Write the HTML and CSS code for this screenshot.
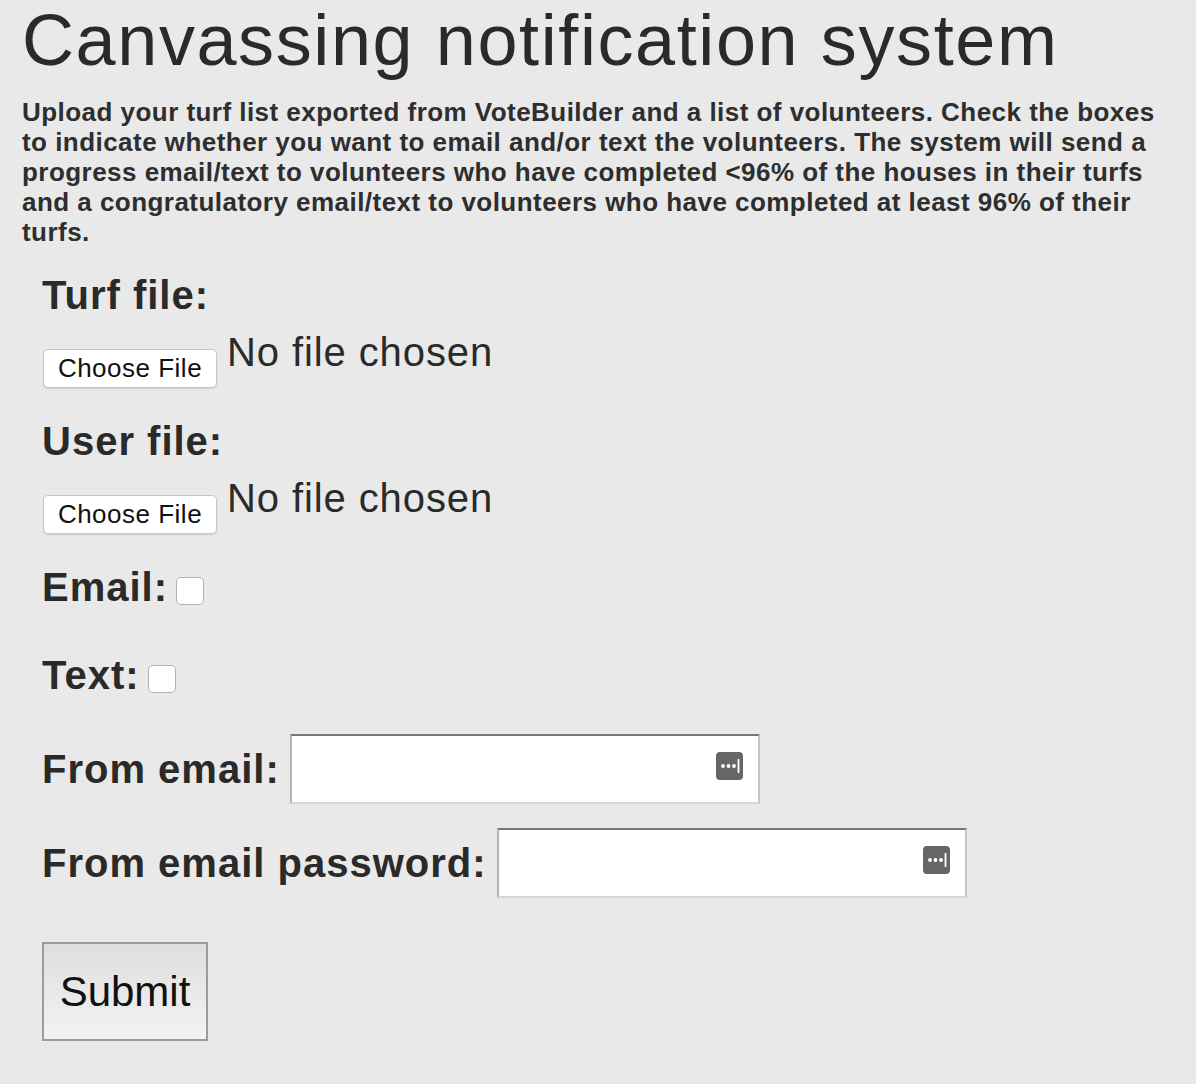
FILE: index.html
```html
<!DOCTYPE html>
<html lang="en">
<head>
<meta charset="utf-8">
<title>Canvassing notification system</title>
<link rel="stylesheet" href="styles.css">
</head>
<body>
<h1 class="title">Canvassing notification system</h1>
<p class="intro">Upload your turf list exported from VoteBuilder and a list of volunteers. Check the boxes to indicate whether you want to email and/or text the volunteers. The system will send a progress email/text to volunteers who have completed &lt;96% of the houses in their turfs and a congratulatory email/text to volunteers who have completed at least 96% of their turfs.</p>
<form class="form">
  <div class="field field-file">
    <label class="label">Turf file:</label>
    <div class="file-row">
      <button type="button" class="file-btn">Choose File</button>
      <span class="file-name">No file chosen</span>
    </div>
  </div>
  <div class="field field-file">
    <label class="label">User file:</label>
    <div class="file-row">
      <button type="button" class="file-btn">Choose File</button>
      <span class="file-name">No file chosen</span>
    </div>
  </div>
  <div class="field field-check">
    <label class="label">Email:</label>
    <span class="checkbox"></span>
  </div>
  <div class="field field-check">
    <label class="label">Text:</label>
    <span class="checkbox"></span>
  </div>
  <div class="field field-input">
    <label class="label">From email:</label>
    <div class="input-wrap">
      <input class="text-input" type="text">
      <span class="key-icon"><svg width="27" height="28" viewBox="0 0 27 28"><rect x="0" y="0" width="27" height="28" rx="4" fill="#666"/><circle cx="7" cy="14" r="1.9" fill="#fff"/><circle cx="12.5" cy="14" r="1.9" fill="#fff"/><circle cx="18" cy="14" r="1.9" fill="#fff"/><rect x="21.6" y="7" width="1.8" height="14" fill="#fff"/></svg></span>
    </div>
  </div>
  <div class="field field-input">
    <label class="label">From email password:</label>
    <div class="input-wrap">
      <input class="text-input" type="password">
      <span class="key-icon"><svg width="27" height="28" viewBox="0 0 27 28"><rect x="0" y="0" width="27" height="28" rx="4" fill="#666"/><circle cx="7" cy="14" r="1.9" fill="#fff"/><circle cx="12.5" cy="14" r="1.9" fill="#fff"/><circle cx="18" cy="14" r="1.9" fill="#fff"/><rect x="21.6" y="7" width="1.8" height="14" fill="#fff"/></svg></span>
    </div>
  </div>
  <button type="button" class="submit">Submit</button>
</form>
</body>
</html>
```
FILE: styles.css
```css
html, body {
  margin: 0;
  padding: 0;
  background: #e9e9e9;
}
body {
  padding: 0 22px;
  color: #2a2a2a;
  font-family: "Liberation Sans", Arial, Helvetica, sans-serif;
}
.title {
  margin: 0;
  font-size: 72px;
  line-height: 80px;
  font-weight: 400;
  letter-spacing: 1.6px;
}
.intro {
  margin: 17px 0 0;
  font-size: 26px;
  line-height: 30px;
  font-weight: 700;
  letter-spacing: 0.46px;
  color: #2e2e2e;
}
.form {
  padding: 24px 0 40px 20px;
}
.label {
  font-size: 40px;
  line-height: 48px;
  font-weight: 700;
  letter-spacing: 1px;
}
.field {
  margin-bottom: 29px;
}
.field-file .label {
  display: block;
}
.file-row {
  display: flex;
  align-items: flex-start;
  margin-top: 9px;
  gap: 10px;
}
.file-btn {
  margin: 21px 0 0 1px;
  width: 174px;
  height: 39px;
  padding: 0;
  background: #fff;
  border: 1px solid #c6c6c6;
  border-radius: 5px;
  box-shadow: 0 1px 1px rgba(0,0,0,0.12);
  font-family: "Liberation Sans", Arial, sans-serif;
  font-size: 26px;
  letter-spacing: 0.5px;
  color: #111;
}
.file-name {
  font-size: 40px;
  line-height: 48px;
  letter-spacing: 0.9px;
}
.field-check {
  display: flex;
  align-items: flex-start;
  gap: 8px;
  height: 48px;
  margin-bottom: 40px;
}
.checkbox {
  margin-top: 14px;
  width: 26px;
  height: 26px;
  background: #fff;
  border: 1px solid #b3b3b3;
  border-radius: 5px;
}
.field-input {
  display: flex;
  align-items: center;
  gap: 10px;
  margin-bottom: 24px;
}
.field-check + .field-input {
  margin-top: -5px;
}
.input-wrap {
  position: relative;
}
.text-input {
  display: block;
  box-sizing: border-box;
  width: 470px;
  height: 70px;
  margin: 0;
  background: #fff;
  border-style: solid;
  border-width: 2px;
  border-color: #777 #c4c4c4 #d6d6d6 #b5b5b5;
}
.key-icon {
  position: absolute;
  right: 17px;
  top: 18px;
  width: 27px;
  height: 28px;
}
.key-icon svg {
  display: block;
}
.submit {
  margin-top: 20px;
  width: 166px;
  height: 99px;
  padding: 0;
  border: 2px solid #9c9c9c;
  background: linear-gradient(#dedede, #f3f3f3);
  font-family: "Liberation Sans", Arial, sans-serif;
  font-size: 42px;
  color: #111;
}
```
